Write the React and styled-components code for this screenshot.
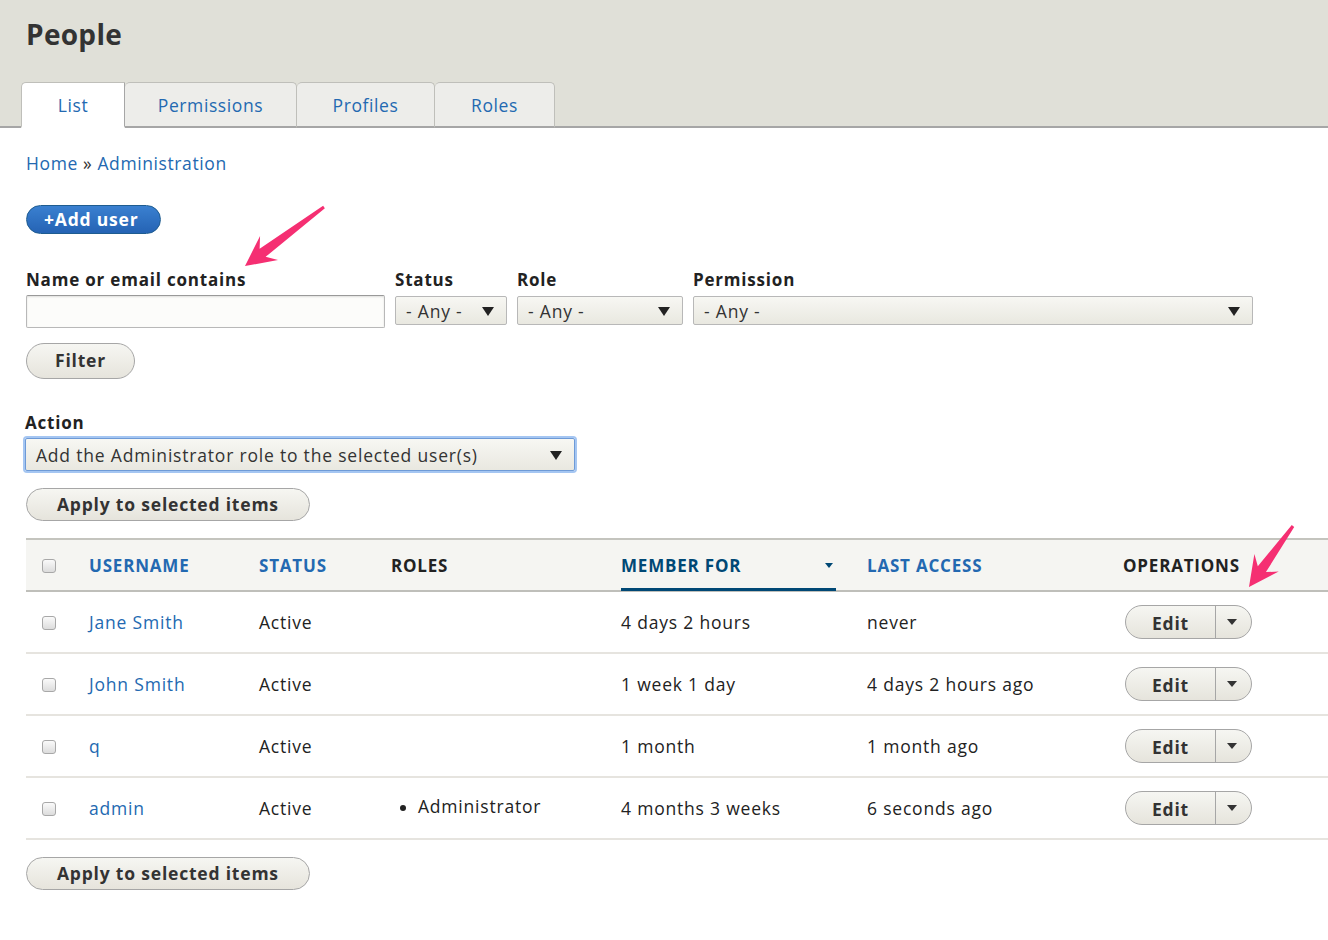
import React from 'react';
import styled, { createGlobalStyle } from 'styled-components';

const GlobalStyle = createGlobalStyle`
  body {
    margin: 0;
    background: #fff;
    font-family: "Open Sans", "DejaVu Sans", sans-serif;
    color: #333;
    letter-spacing: 0.8px;
  }
`;

const users = [
  { name: 'Jane Smith', status: 'Active', roles: [], member: '4 days 2 hours', access: 'never' },
  { name: 'John Smith', status: 'Active', roles: [], member: '1 week 1 day', access: '4 days 2 hours ago' },
  { name: 'q', status: 'Active', roles: [], member: '1 month', access: '1 month ago' },
  { name: 'admin', status: 'Active', roles: ['Administrator'], member: '4 months 3 weeks', access: '6 seconds ago' },
];

const App = () => (
  <Page>
    <GlobalStyle />
    <Header>
      <Title>People</Title>
      <Tabs>
        <Tab active width={104}>List</Tab>
        <Tab width={172}>Permissions</Tab>
        <Tab width={138}>Profiles</Tab>
        <Tab width={120}>Roles</Tab>
      </Tabs>
    </Header>

    <Content>
      <Breadcrumb>
        <Link>Home</Link> » <Link>Administration</Link>
      </Breadcrumb>

      <PrimaryButton>+Add user</PrimaryButton>

      <Filters>
        <Field>
          <Label>Name or email contains</Label>
          <TextInput />
        </Field>
        <Field>
          <Label>Status</Label>
          <Select width={112}>- Any -</Select>
        </Field>
        <Field>
          <Label>Role</Label>
          <Select width={166}>- Any -</Select>
        </Field>
        <Field>
          <Label>Permission</Label>
          <Select width={560}>- Any -</Select>
        </Field>
      </Filters>

      <Button>Filter</Button>

      <ActionField>
        <Label>Action</Label>
        <Select width={550} focused>Add the Administrator role to the selected user(s)</Select>
      </ActionField>

      <Button wide>Apply to selected items</Button>

      <Table>
        <HeadRow>
          <CheckCell><Checkbox /></CheckCell>
          <HeadCell link>Username</HeadCell>
          <HeadCell link>Status</HeadCell>
          <HeadCell>Roles</HeadCell>
          <HeadCell>
            <SortActive>
              Member for
              <SortArrow />
            </SortActive>
          </HeadCell>
          <HeadCell link>Last access</HeadCell>
          <HeadCell>Operations</HeadCell>
        </HeadRow>
        {users.map((u) => (
          <Row key={u.name}>
            <CheckCell><Checkbox /></CheckCell>
            <Cell><Link>{u.name}</Link></Cell>
            <Cell>{u.status}</Cell>
            <Cell>
              {u.roles.length > 0 && (
                <RoleList>
                  {u.roles.map((r) => <li key={r}>{r}</li>)}
                </RoleList>
              )}
            </Cell>
            <Cell>{u.member}</Cell>
            <Cell>{u.access}</Cell>
            <Cell>
              <SplitButton>
                <SplitMain>Edit</SplitMain>
                <SplitToggle><SmallArrow /></SplitToggle>
              </SplitButton>
            </Cell>
          </Row>
        ))}
      </Table>

      <Button wide>Apply to selected items</Button>
    </Content>

    <Overlay width="1328" height="940" viewBox="0 0 1328 940">
      <Arrow x={324} y={207} tx={245} ty={266} />
      <Arrow x={1293} y={526} tx={1249} ty={587} />
    </Overlay>
  </Page>
);

// pink call-out arrow, drawn pointing along +x then rotated into place
const Arrow = ({ x, y, tx, ty }) => {
  const dx = tx - x;
  const dy = ty - y;
  const L = Math.sqrt(dx * dx + dy * dy);
  const a = (Math.atan2(dy, dx) * 180) / Math.PI;
  const d = `M0,-1.5 L${L - 22},-5 L${L - 30},-15 L${L},0 L${L - 30},15 L${L - 22},5 L0,1.5 Z`;
  return <path d={d} fill="#f52f72" transform={`translate(${x} ${y}) rotate(${a})`} />;
};

export default App;

const Page = styled.div`
  position: relative;
  width: 1328px;
  min-height: 940px;
  overflow: hidden;
`;

const Header = styled.div`
  background: #e0e0d8;
  padding: 16px 0 0 21px;
  border-bottom: 2px solid #a6a6a6;
  height: 110px;
  display: flex;
  flex-direction: column;
  justify-content: space-between;
`;

const Title = styled.h1`
  margin: 0 0 0 5px;
  font-size: 28px;
  font-weight: 700;
  color: #333;
  line-height: 36px;
  letter-spacing: 0.3px;
`;

const Tabs = styled.div`
  display: flex;
  margin-bottom: -2px;
`;

const Tab = styled.div`
  height: 43px;
  width: ${(p) => p.width - (p.active ? 2 : 1)}px;
  display: flex;
  align-items: center;
  justify-content: center;
  font-size: 17.5px;
  letter-spacing: 0.6px;
  color: #2369b1;
  background: ${(p) => (p.active ? '#fff' : '#ededea')};
  border: 1px solid #bfbfba;
  border-bottom: ${(p) => (p.active ? '2px solid #fff' : '2px solid #a6a6a6')};
  border-left-width: ${(p) => (p.active ? '1px' : '0')};
  border-radius: 5px 5px 0 0;
  box-sizing: content-box;
  ${(p) => p.active && 'border-radius: 5px 0 0 0; border-right: 1px solid #a6a6a6;'}
`;

const Content = styled.div`
  padding: 23px 0 40px 26px;
  display: flex;
  flex-direction: column;
  align-items: flex-start;
`;

const Breadcrumb = styled.div`
  font-size: 17.5px;
  color: #333;
  line-height: 24px;
  letter-spacing: 0.6px;
  margin-bottom: 30px;
`;

const Link = styled.a`
  color: #2369b1;
  text-decoration: none;
`;

const PrimaryButton = styled.button`
  height: 29px;
  padding: 0 22px 0 17px;
  border-radius: 20px;
  border: 1px solid #1e5c90;
  background: linear-gradient(#3a80d0, #2563b4);
  color: #fff;
  font-family: inherit;
  font-weight: 700;
  font-size: 17.5px;
  letter-spacing: 0.8px;
  line-height: 1;
`;

const Filters = styled.div`
  display: flex;
  gap: 10px;
  margin-top: 34px;
`;

const Field = styled.div`
  display: flex;
  flex-direction: column;
`;

const Label = styled.label`
  font-weight: 700;
  font-size: 17px;
  color: #222;
  line-height: 24px;
  margin-bottom: 3px;
`;

const TextInput = styled.div`
  width: 357px;
  height: 31px;
  border: 1px solid #b8b8b8;
  border-top-color: #999;
  border-radius: 2px;
  background: #fcfcfa;
  box-shadow: inset 0 1px 2px rgba(0, 0, 0, 0.12);
`;

const Select = styled.div`
  position: relative;
  height: ${(p) => (p.focused ? 31 : 27)}px;
  margin-top: ${(p) => (p.focused ? 0 : 1)}px;
  border: 1px solid ${(p) => (p.focused ? '#6e9ad6' : '#b8b8b8')};
  border-radius: 2px;
  background: linear-gradient(#f7f7f3, #e9e8e0);
  box-shadow: ${(p) => (p.focused ? '0 0 0 2px #a5c6f2' : 'none')};
  font-size: 17.5px;
  color: #333;
  display: flex;
  align-items: center;
  padding-left: 10px;
  box-sizing: content-box;
  width: ${(p) => p.width - 12}px;
  &::after {
    content: '';
    position: absolute;
    right: 12px;
    top: 50%;
    margin-top: -4px;
    border-left: 6px solid transparent;
    border-right: 6px solid transparent;
    border-top: 9px solid #222;
  }
`;

const Button = styled.button`
  margin-top: ${(p) => (p.wide ? 17 : 15)}px;
  height: ${(p) => (p.wide ? 33 : 36)}px;
  padding: 0 ${(p) => (p.wide ? 30 : 28)}px;
  border-radius: 20px;
  border: 1px solid #a6a6a6;
  background: linear-gradient(#f6f6f2, #e6e4dc);
  color: #333;
  font-family: inherit;
  font-weight: 700;
  font-size: 17.5px;
  letter-spacing: 0.8px;
  line-height: 1;
`;

const ActionField = styled.div`
  display: flex;
  flex-direction: column;
  margin-top: 32px;
  margin-left: -1px;
`;

const Table = styled.div`
  margin-top: 17px;
  align-self: stretch;
  display: flex;
  flex-direction: column;
`;

const columns = '63px 170px 132px 230px 246px 256px 1fr';

const HeadRow = styled.div`
  display: grid;
  grid-template-columns: ${columns};
  height: 50px;
  background: #f5f5f2;
  border-top: 2px solid #c4c4be;
  border-bottom: 2px solid #bfbfba;
  align-items: center;
`;

const Row = styled.div`
  display: grid;
  grid-template-columns: ${columns};
  height: 60px;
  border-bottom: 2px solid #e6e4df;
  align-items: center;
  font-size: 17.5px;
  color: #222;
`;

const HeadCell = styled.div`
  font-weight: 700;
  font-size: 17px;
  text-transform: uppercase;
  color: ${(p) => (p.link ? '#2369b1' : '#222')};
  height: 100%;
  display: flex;
  align-items: center;
`;

const SortActive = styled.div`
  width: 215px;
  height: 100%;
  box-sizing: border-box;
  border-bottom: 3px solid #004875;
  margin-bottom: -2px;
  padding-top: 1px;
  display: flex;
  align-items: center;
  justify-content: space-between;
  color: #004875;
`;

const SortArrow = styled.span`
  border-left: 4px solid transparent;
  border-right: 4px solid transparent;
  border-top: 5px solid #004875;
  margin-right: 3px;
`;

const Cell = styled.div`
  display: flex;
  align-items: center;
`;

const CheckCell = styled.div`
  padding-left: 16px;
  display: flex;
  align-items: center;
`;

const Checkbox = styled.span`
  width: 12px;
  height: 12px;
  border: 1px solid #a8a8a8;
  border-radius: 3px;
  background: linear-gradient(#fafafa, #dcdcdc);
  margin-top: 2px;
`;

const RoleList = styled.ul`
  margin: -4px 0 0;
  padding: 0 0 0 27px;
  li::marker {
    font-size: 16px;
  }
`;

const SplitButton = styled.div`
  display: flex;
  height: 32px;
  margin-left: 2px;
  border: 1px solid #a6a6a6;
  border-radius: 20px;
  background: linear-gradient(#f6f6f2, #e6e4dc);
  overflow: hidden;
`;

const SplitMain = styled.div`
  width: 89px;
  display: flex;
  align-items: center;
  justify-content: center;
  font-weight: 700;
  font-size: 17.5px;
  color: #333;
  border-right: 1px solid #a6a6a6;
  padding-top: 1px;
`;

const SplitToggle = styled.div`
  width: 35px;
  display: flex;
  align-items: center;
  justify-content: center;
`;

const SmallArrow = styled.span`
  border-left: 5px solid transparent;
  border-right: 5px solid transparent;
  border-top: 6px solid #333;
  margin-right: 3px;
`;

const Overlay = styled.svg`
  position: absolute;
  left: 0;
  top: 0;
  pointer-events: none;
`;
